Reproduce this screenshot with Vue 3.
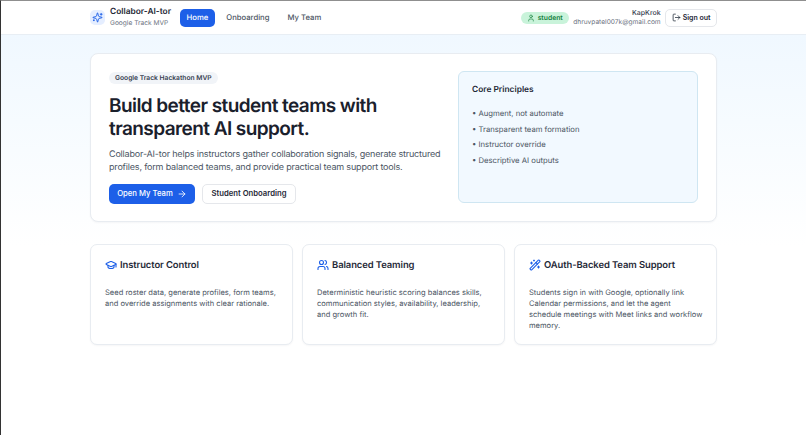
<script setup>
const principles = ['Augment, not automate', 'Transparent team formation', 'Instructor override', 'Descriptive AI outputs']
</script>

<template>
  <div class="page">
    <header class="topbar">
      <div class="bar">
        <div class="brand">
          <span class="logo">
            <svg viewBox="0 0 24 24" width="11" height="11" fill="none" stroke="#1d5fe8" stroke-width="2" stroke-linecap="round" stroke-linejoin="round"><path d="M9.9 15.5A2 2 0 0 0 8.5 14.1L2.4 12.5a.5.5 0 0 1 0-1l6.1-1.6A2 2 0 0 0 9.9 8.5l1.6-6.1a.5.5 0 0 1 1 0l1.6 6.1a2 2 0 0 0 1.4 1.4l6.1 1.6a.5.5 0 0 1 0 1l-6.1 1.6a2 2 0 0 0-1.4 1.4l-1.6 6.1a.5.5 0 0 1-1 0z"/><path d="M20 3v4M22 5h-4M4 17v2M5 18H3"/></svg>
          </span>
          <div class="brand-text">
            <div class="brand-name">Collabor-AI-tor</div>
            <div class="brand-sub">Google Track MVP</div>
          </div>
        </div>
        <nav class="nav">
          <a class="nav-link active">Home</a>
          <a class="nav-link">Onboarding</a>
          <a class="nav-link">My Team</a>
        </nav>
        <div class="user">
          <span class="role">
            <svg viewBox="0 0 24 24" width="8" height="8" fill="none" stroke="#15803d" stroke-width="2" stroke-linecap="round" stroke-linejoin="round"><path d="M19 21v-2a4 4 0 0 0-4-4H9a4 4 0 0 0-4 4v2"/><circle cx="12" cy="7" r="4"/></svg>
            student
          </span>
          <div class="who">
            <div class="who-name">KapKrok</div>
            <div class="who-mail">dhruvpatel007k@gmail.com</div>
          </div>
          <button class="signout">
            <svg viewBox="0 0 24 24" width="9" height="9" fill="none" stroke="#1f2937" stroke-width="2" stroke-linecap="round" stroke-linejoin="round"><path d="M9 21H5a2 2 0 0 1-2-2V5a2 2 0 0 1 2-2h4"/><path d="M16 17l5-5-5-5"/><path d="M21 12H9"/></svg>
            Sign out
          </button>
        </div>
      </div>
    </header>

    <main class="main">
      <section class="hero">
        <div class="hero-left">
          <span class="tag">Google Track Hackathon MVP</span>
          <h1>Build better student teams with<br>transparent AI support.</h1>
          <p class="lead">Collabor-AI-tor helps instructors gather collaboration signals, generate structured<br>profiles, form balanced teams, and provide practical team support tools.</p>
          <div class="actions">
            <button class="btn primary">
              Open My Team
              <svg viewBox="0 0 24 24" width="10" height="10" fill="none" stroke="#fff" stroke-width="2" stroke-linecap="round" stroke-linejoin="round"><path d="M5 12h14M12 5l7 7-7 7"/></svg>
            </button>
            <button class="btn ghost">Student Onboarding</button>
          </div>
        </div>
        <aside class="principles">
          <h2>Core Principles</h2>
          <ul>
            <li v-for="p in principles" :key="p">• {{ p }}</li>
          </ul>
        </aside>
      </section>

      <section class="cards">
        <article class="card">
          <h3>
            <svg viewBox="0 0 24 24" width="12" height="12" fill="none" stroke="#1d5fe8" stroke-width="2.2" stroke-linecap="round" stroke-linejoin="round"><path d="M21.4 10.9a1 1 0 0 0 0-1.8L12.8 5.2a2 2 0 0 0-1.7 0L2.6 9.1a1 1 0 0 0 0 1.8l8.5 3.9a2 2 0 0 0 1.7 0z"/><path d="M22 10v6"/><path d="M6 12.5V16a6 3 0 0 0 12 0v-3.5"/></svg>
            Instructor Control
          </h3>
          <p>Seed roster data, generate profiles, form teams, and override assignments with clear rationale.</p>
        </article>
        <article class="card">
          <h3>
            <svg viewBox="0 0 24 24" width="12" height="12" fill="none" stroke="#1d5fe8" stroke-width="2.2" stroke-linecap="round" stroke-linejoin="round"><path d="M16 21v-2a4 4 0 0 0-4-4H6a4 4 0 0 0-4 4v2"/><circle cx="9" cy="7" r="4"/><path d="M22 21v-2a4 4 0 0 0-3-3.9"/><path d="M16 3.1a4 4 0 0 1 0 7.8"/></svg>
            Balanced Teaming
          </h3>
          <p>Deterministic heuristic scoring balances skills, communication styles, availability, leadership, and growth fit.</p>
        </article>
        <article class="card">
          <h3>
            <svg viewBox="0 0 24 24" width="12" height="12" fill="none" stroke="#1d5fe8" stroke-width="2.2" stroke-linecap="round" stroke-linejoin="round"><path d="m21.64 3.64-1.28-1.28a1.21 1.21 0 0 0-1.72 0L2.36 18.64a1.21 1.21 0 0 0 0 1.72l1.28 1.28a1.2 1.2 0 0 0 1.72 0L21.64 5.36a1.2 1.2 0 0 0 0-1.72"/><path d="m14 7 3 3M5 6v4M19 14v4M10 2v2M7 8H3M21 16h-4M11 3H9"/></svg>
            OAuth-Backed Team Support
          </h3>
          <p>Students sign in with Google, optionally link<br>Calendar permissions, and let the agent<br>schedule meetings with Meet links and workflow<br>memory.</p>
        </article>
      </section>
    </main>
  </div>
</template>

<style>
html, body { margin: 0; background: #fff; }
</style>

<style scoped>
.page {
  box-sizing: border-box;
  height: 435px;
  overflow: hidden;
  border-top: 1px solid #8f8f8f;
  border-left: 1px solid #333;
  font-family: Inter, "Liberation Sans", sans-serif;
  text-rendering: geometricPrecision;
  color: #111827;
  background: linear-gradient(180deg, #f0f8ff 34px, #f6fbff 120px, #ffffff 245px);
}
.topbar { background: #fff; border-bottom: 1px solid #e8eef4; height: 33px; }
.bar {
  box-sizing: border-box;
  width: 627px;
  height: 33px;
  margin-left: 89px;
  display: flex;
  align-items: center;
}
.brand { display: flex; align-items: center; gap: 5px; }
.logo {
  width: 15px; height: 15px;
  border-radius: 5px;
  background: #e5eeff;
  display: flex; align-items: center; justify-content: center;
}
.brand-name { font-size: 8.4px; line-height: 11px; font-weight: 600; color: #1f2937; }
.brand-sub { font-size: 6.6px; line-height: 10px; color: #6b7280; }
.nav { display: flex; align-items: center; gap: 5px; margin-left: 9px; }
.nav-link {
  font-size: 7.7px; font-weight: 500; color: #4b5563;
  padding: 0 6.5px; height: 18px; line-height: 18px; border-radius: 5px;
}
.nav-link.active { background: #1d5fe8; color: #fff; }
.user { margin-left: auto; display: flex; align-items: center; gap: 4.5px; }
.role {
  display: inline-flex; align-items: center; gap: 3px;
  background: #c9f3da; color: #15803d;
  font-size: 6.8px; font-weight: 600;
  padding: 0 6px; height: 12px; border-radius: 6px;
}
.who { text-align: right; font-size: 6.6px; line-height: 8.5px; }
.who-name { color: #374151; font-weight: 500; font-size: 7px; }
.who-mail { color: #6b7280; }
.signout {
  display: inline-flex; align-items: center; gap: 2px;
  height: 18px; padding: 0 5.5px;
  background: #fff; border: 1px solid #e5e7eb; border-radius: 5px;
  font: 600 7px Inter, sans-serif; color: #1f2937;
  white-space: nowrap;
}
.signout svg { flex: none; }
.main { width: 627px; margin: 18px 0 0 89px; }
.hero {
  box-sizing: border-box;
  height: 169px;
  background: #fff;
  border: 1px solid #e8ecf1;
  border-radius: 8px;
  box-shadow: 0 1px 2px rgba(15, 23, 42, 0.04);
  padding: 17px 18px;
  display: flex;
  justify-content: space-between;
}
.hero-left { width: 340px; flex: none; }
.tag {
  display: block;
  width: fit-content;
  margin-top: 1px;
  background: #f1f4f8;
  color: #374151;
  font-size: 6.7px; font-weight: 600;
  padding: 0 6px; height: 12px; line-height: 12px;
  border-radius: 6px;
}
h1 {
  margin: 10px 0 0;
  font-size: 19px; line-height: 23px; font-weight: 600;
  letter-spacing: -0.03em;
  color: #1a202c;
}
.lead { margin: 8px 0 0; font-size: 9px; letter-spacing: -0.18px; line-height: 13.2px; color: #4b5563; white-space: nowrap; }
.actions { display: flex; gap: 7px; margin-top: 9.5px; }
.btn {
  height: 20px; border-radius: 5px;
  font: 500 7.7px Inter, sans-serif;
  display: inline-flex; align-items: center; justify-content: center; gap: 4px;
  box-sizing: border-box;
  white-space: nowrap;
  padding: 0;
}
.btn svg { flex: none; }
.primary { background: #1d5fe8; color: #fff; border: 0; width: 86px; }
.ghost { background: #fff; color: #1f2937; border: 1px solid #e5e7eb; width: 94px; font-weight: 600; }
.principles {
  box-sizing: border-box;
  flex: none;
  width: 240px;
  height: 132px;
  background: #f2f9ff;
  border: 1px solid #cfe6f2;
  border-radius: 6px;
  padding: 12px 13px;
}
h2 { margin: 0; font-size: 8.4px; line-height: 12px; font-weight: 600; color: #1f2937; }
ul { list-style: none; margin: 10px 0 0; padding: 0; }
li { font-size: 7.7px; line-height: 15.6px; color: #4b5563; }
.cards { display: grid; grid-template-columns: repeat(3, 1fr); gap: 9px; margin-top: 22px; }
.card {
  box-sizing: border-box;
  height: 101px;
  background: #fff;
  border: 1px solid #e8ecf1;
  border-radius: 7px;
  box-shadow: 0 1px 2px rgba(15, 23, 42, 0.04);
  padding: 14px 12px 13px 14px;
}
h3 {
  margin: 0;
  display: flex; align-items: center; gap: 3px;
  font-size: 9.45px; line-height: 14px; font-weight: 600;
  letter-spacing: -0.01em; color: #1f2937;
}
h3 svg { flex: none; margin-top: -1.5px; }
.card p { margin: 13.5px 0 0; font-size: 7.55px; line-height: 11.2px; color: #4b5563; }
</style>
